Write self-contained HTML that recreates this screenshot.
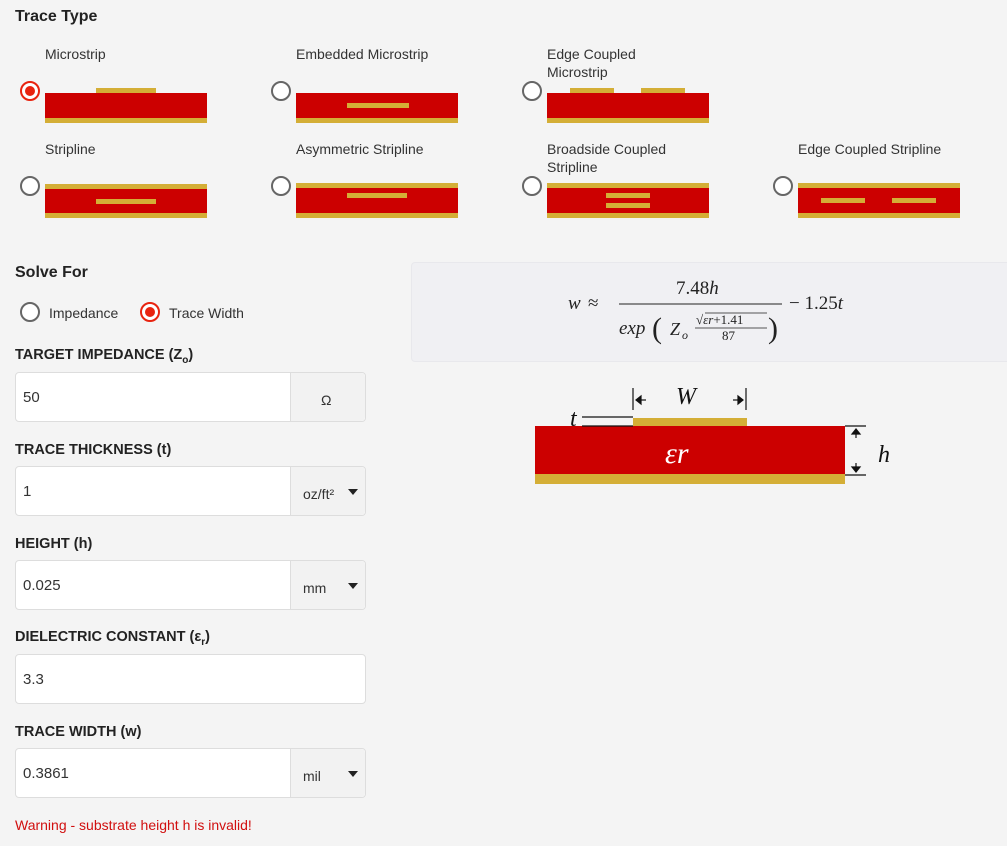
<!DOCTYPE html>
<html><head><meta charset="utf-8"><style>
*{box-sizing:border-box;margin:0;padding:0}
body{width:1007px;height:846px;background:#f4f4f4;font-family:"Liberation Sans",Arial,sans-serif;color:#333;position:relative;overflow:hidden}
.a{position:absolute}
.h{font-weight:bold;font-size:16px;color:#222}
.lbl{font-size:14px;color:#333;line-height:18px}
.r{position:absolute;width:20px;height:20px;border:2px solid #666;border-radius:50%;background:#fff}
.r.on{border-color:#e8230f}
.r.on:after{content:"";position:absolute;left:3px;top:3px;width:10px;height:10px;border-radius:50%;background:#e8230f}
.g{position:absolute;background:#d4ae36}
.red{position:absolute;background:#cc0000}
.fl{position:absolute;left:15px;font-weight:bold;font-size:14.5px;color:#222}
.in{position:absolute;left:15px;width:351px;height:50px;background:#fff;border:1px solid #ddd;border-radius:4px;font-size:15px;color:#333;padding:16px 0 0 7px}
.ad{position:absolute;right:0;top:0;bottom:0;width:75px;background:#f2f2f2;border-left:1px solid #ddd;border-radius:0 4px 4px 0;font-size:14px;padding-top:5px;display:flex;align-items:center;padding-left:12px}
.tri{position:absolute;right:7px;top:22px;width:0;height:0;border-left:5px solid transparent;border-right:5px solid transparent;border-top:6px solid #222}
</style></head><body>
<div class="a h" style="left:15px;top:8px">Trace Type</div>

<div class="a lbl" style="left:45px;top:45px">Microstrip</div>
<div class="a lbl" style="left:296px;top:45px">Embedded Microstrip</div>
<div class="a lbl" style="left:547px;top:45px">Edge Coupled<br>Microstrip</div>
<div class="a lbl" style="left:45px;top:140px">Stripline</div>
<div class="a lbl" style="left:296px;top:140px">Asymmetric Stripline</div>
<div class="a lbl" style="left:547px;top:140px">Broadside Coupled<br>Stripline</div>
<div class="a lbl" style="left:798px;top:140px">Edge Coupled Stripline</div>

<div class="r on" style="left:20px;top:81px"></div>
<div class="r" style="left:271px;top:81px"></div>
<div class="r" style="left:522px;top:81px"></div>
<div class="r" style="left:20px;top:176px"></div>
<div class="r" style="left:271px;top:176px"></div>
<div class="r" style="left:522px;top:176px"></div>
<div class="r" style="left:773px;top:176px"></div>

<div class="g" style="left:96px;top:88px;width:60px;height:5px"></div>
<div class="red" style="left:45px;top:93px;width:162px;height:25px"></div>
<div class="g" style="left:45px;top:118px;width:162px;height:5px"></div>
<div class="red" style="left:296px;top:93px;width:162px;height:25px"></div>
<div class="g" style="left:347px;top:103px;width:62px;height:5px"></div>
<div class="g" style="left:296px;top:118px;width:162px;height:5px"></div>
<div class="g" style="left:570px;top:88px;width:44px;height:5px"></div>
<div class="g" style="left:641px;top:88px;width:44px;height:5px"></div>
<div class="red" style="left:547px;top:93px;width:162px;height:25px"></div>
<div class="g" style="left:547px;top:118px;width:162px;height:5px"></div>
<div class="g" style="left:45px;top:184px;width:162px;height:5px"></div>
<div class="red" style="left:45px;top:189px;width:162px;height:24px"></div>
<div class="g" style="left:96px;top:199px;width:60px;height:5px"></div>
<div class="g" style="left:45px;top:213px;width:162px;height:5px"></div>
<div class="g" style="left:296px;top:183px;width:162px;height:5px"></div>
<div class="red" style="left:296px;top:188px;width:162px;height:25px"></div>
<div class="g" style="left:347px;top:193px;width:60px;height:5px"></div>
<div class="g" style="left:296px;top:213px;width:162px;height:5px"></div>
<div class="g" style="left:547px;top:183px;width:162px;height:5px"></div>
<div class="red" style="left:547px;top:188px;width:162px;height:25px"></div>
<div class="g" style="left:606px;top:193px;width:44px;height:5px"></div>
<div class="g" style="left:606px;top:203px;width:44px;height:5px"></div>
<div class="g" style="left:547px;top:213px;width:162px;height:5px"></div>
<div class="g" style="left:798px;top:183px;width:162px;height:5px"></div>
<div class="red" style="left:798px;top:188px;width:162px;height:25px"></div>
<div class="g" style="left:821px;top:198px;width:44px;height:5px"></div>
<div class="g" style="left:892px;top:198px;width:44px;height:5px"></div>
<div class="g" style="left:798px;top:213px;width:162px;height:5px"></div>

<div class="a h" style="left:15px;top:264px">Solve For</div>
<div class="r" style="left:20px;top:302px"></div>
<div class="a lbl" style="left:49px;top:304px">Impedance</div>
<div class="r on" style="left:140px;top:302px"></div>
<div class="a lbl" style="left:169px;top:304px">Trace Width</div>

<div class="fl" style="top:347px">TARGET IMPEDANCE (Z<sub style="font-size:10px">o</sub>)</div>
<div class="in" style="top:372px">50<div class="ad" style="padding-left:30px">Ω</div></div>
<div class="fl" style="top:442px">TRACE THICKNESS (t)</div>
<div class="in" style="top:466px">1<div class="ad">oz/ft²<span class="tri"></span></div></div>
<div class="fl" style="top:536px">HEIGHT (h)</div>
<div class="in" style="top:560px">0.025<div class="ad">mm<span class="tri"></span></div></div>
<div class="fl" style="top:629px">DIELECTRIC CONSTANT (ε<sub style="font-size:10px">r</sub>)</div>
<div class="in" style="top:654px">3.3</div>
<div class="fl" style="top:724px">TRACE WIDTH (w)</div>
<div class="in" style="top:748px">0.3861<div class="ad">mil<span class="tri"></span></div></div>
<div class="a" style="left:15px;top:817px;font-size:14px;color:#d10f0f">Warning - substrate height h is invalid!</div>

<div class="a" style="left:411px;top:262px;width:600px;height:100px;background:#f0f0f3;border:1px solid #e8e8ec;border-radius:4px"></div>
<svg class="a" style="left:411px;top:262px" width="596" height="100">
<g font-family="Liberation Serif,serif" fill="#222">
<text x="157" y="47" font-size="19" font-style="italic">w</text>
<text x="177" y="47" font-size="19">≈</text>
<text x="265" y="32" font-size="19">7.48<tspan font-style="italic">h</tspan></text>
<line x1="208" y1="42" x2="371" y2="42" stroke="#222" stroke-width="1"/>
<text x="208" y="72" font-size="19" font-style="italic">exp</text>
<text x="241" y="76" font-size="30">(</text>
<text x="259" y="73" font-size="18" font-style="italic">Z</text>
<text x="271" y="77" font-size="12" font-style="italic">o</text>
<text x="285" y="62" font-size="13">√<tspan font-style="italic">εr</tspan>+1.41</text>
<line x1="294" y1="51" x2="356" y2="51" stroke="#222" stroke-width="0.8"/>
<line x1="284" y1="66" x2="356" y2="66" stroke="#222" stroke-width="0.8"/>
<text x="311" y="78" font-size="13">87</text>
<text x="357" y="76" font-size="30">)</text>
<text x="378" y="47" font-size="19">− 1.25<tspan font-style="italic">t</tspan></text>
</g></svg>

<svg class="a" style="left:530px;top:380px" width="380" height="110">
<rect x="103" y="38" width="114" height="8" fill="#d4ae36"/>
<rect x="5" y="46" width="310" height="48" fill="#cc0000"/>
<rect x="5" y="94" width="310" height="10" fill="#d4ae36"/>
<text x="135" y="83" font-family="Liberation Serif,serif" font-style="italic" font-size="30" fill="#fff">εr</text>
<g stroke="#111" stroke-width="1.2" fill="#111">
<line x1="103" y1="8" x2="103" y2="30"/><line x1="216" y1="8" x2="216" y2="30"/>
<line x1="106" y1="20" x2="116" y2="20"/><path d="M106 20 L111 16 L111 24Z"/>
<line x1="203" y1="20" x2="213" y2="20"/><path d="M213 20 L208 16 L208 24Z"/>
<line x1="52" y1="37" x2="103" y2="37"/><line x1="52" y1="46" x2="103" y2="46"/>
<line x1="315" y1="46" x2="336" y2="46"/><line x1="315" y1="95" x2="336" y2="95"/>
<line x1="326" y1="50" x2="326" y2="58"/><path d="M326 49 L322 54 L330 54Z"/>
<line x1="326" y1="83" x2="326" y2="91"/><path d="M326 92 L322 87 L330 87Z"/>
</g>
<g font-family="Liberation Serif,serif" font-style="italic" fill="#111" font-size="24">
<text x="146" y="24">W</text><text x="40" y="46">t</text><text x="348" y="82">h</text>
</g>
</svg>
</body></html>
